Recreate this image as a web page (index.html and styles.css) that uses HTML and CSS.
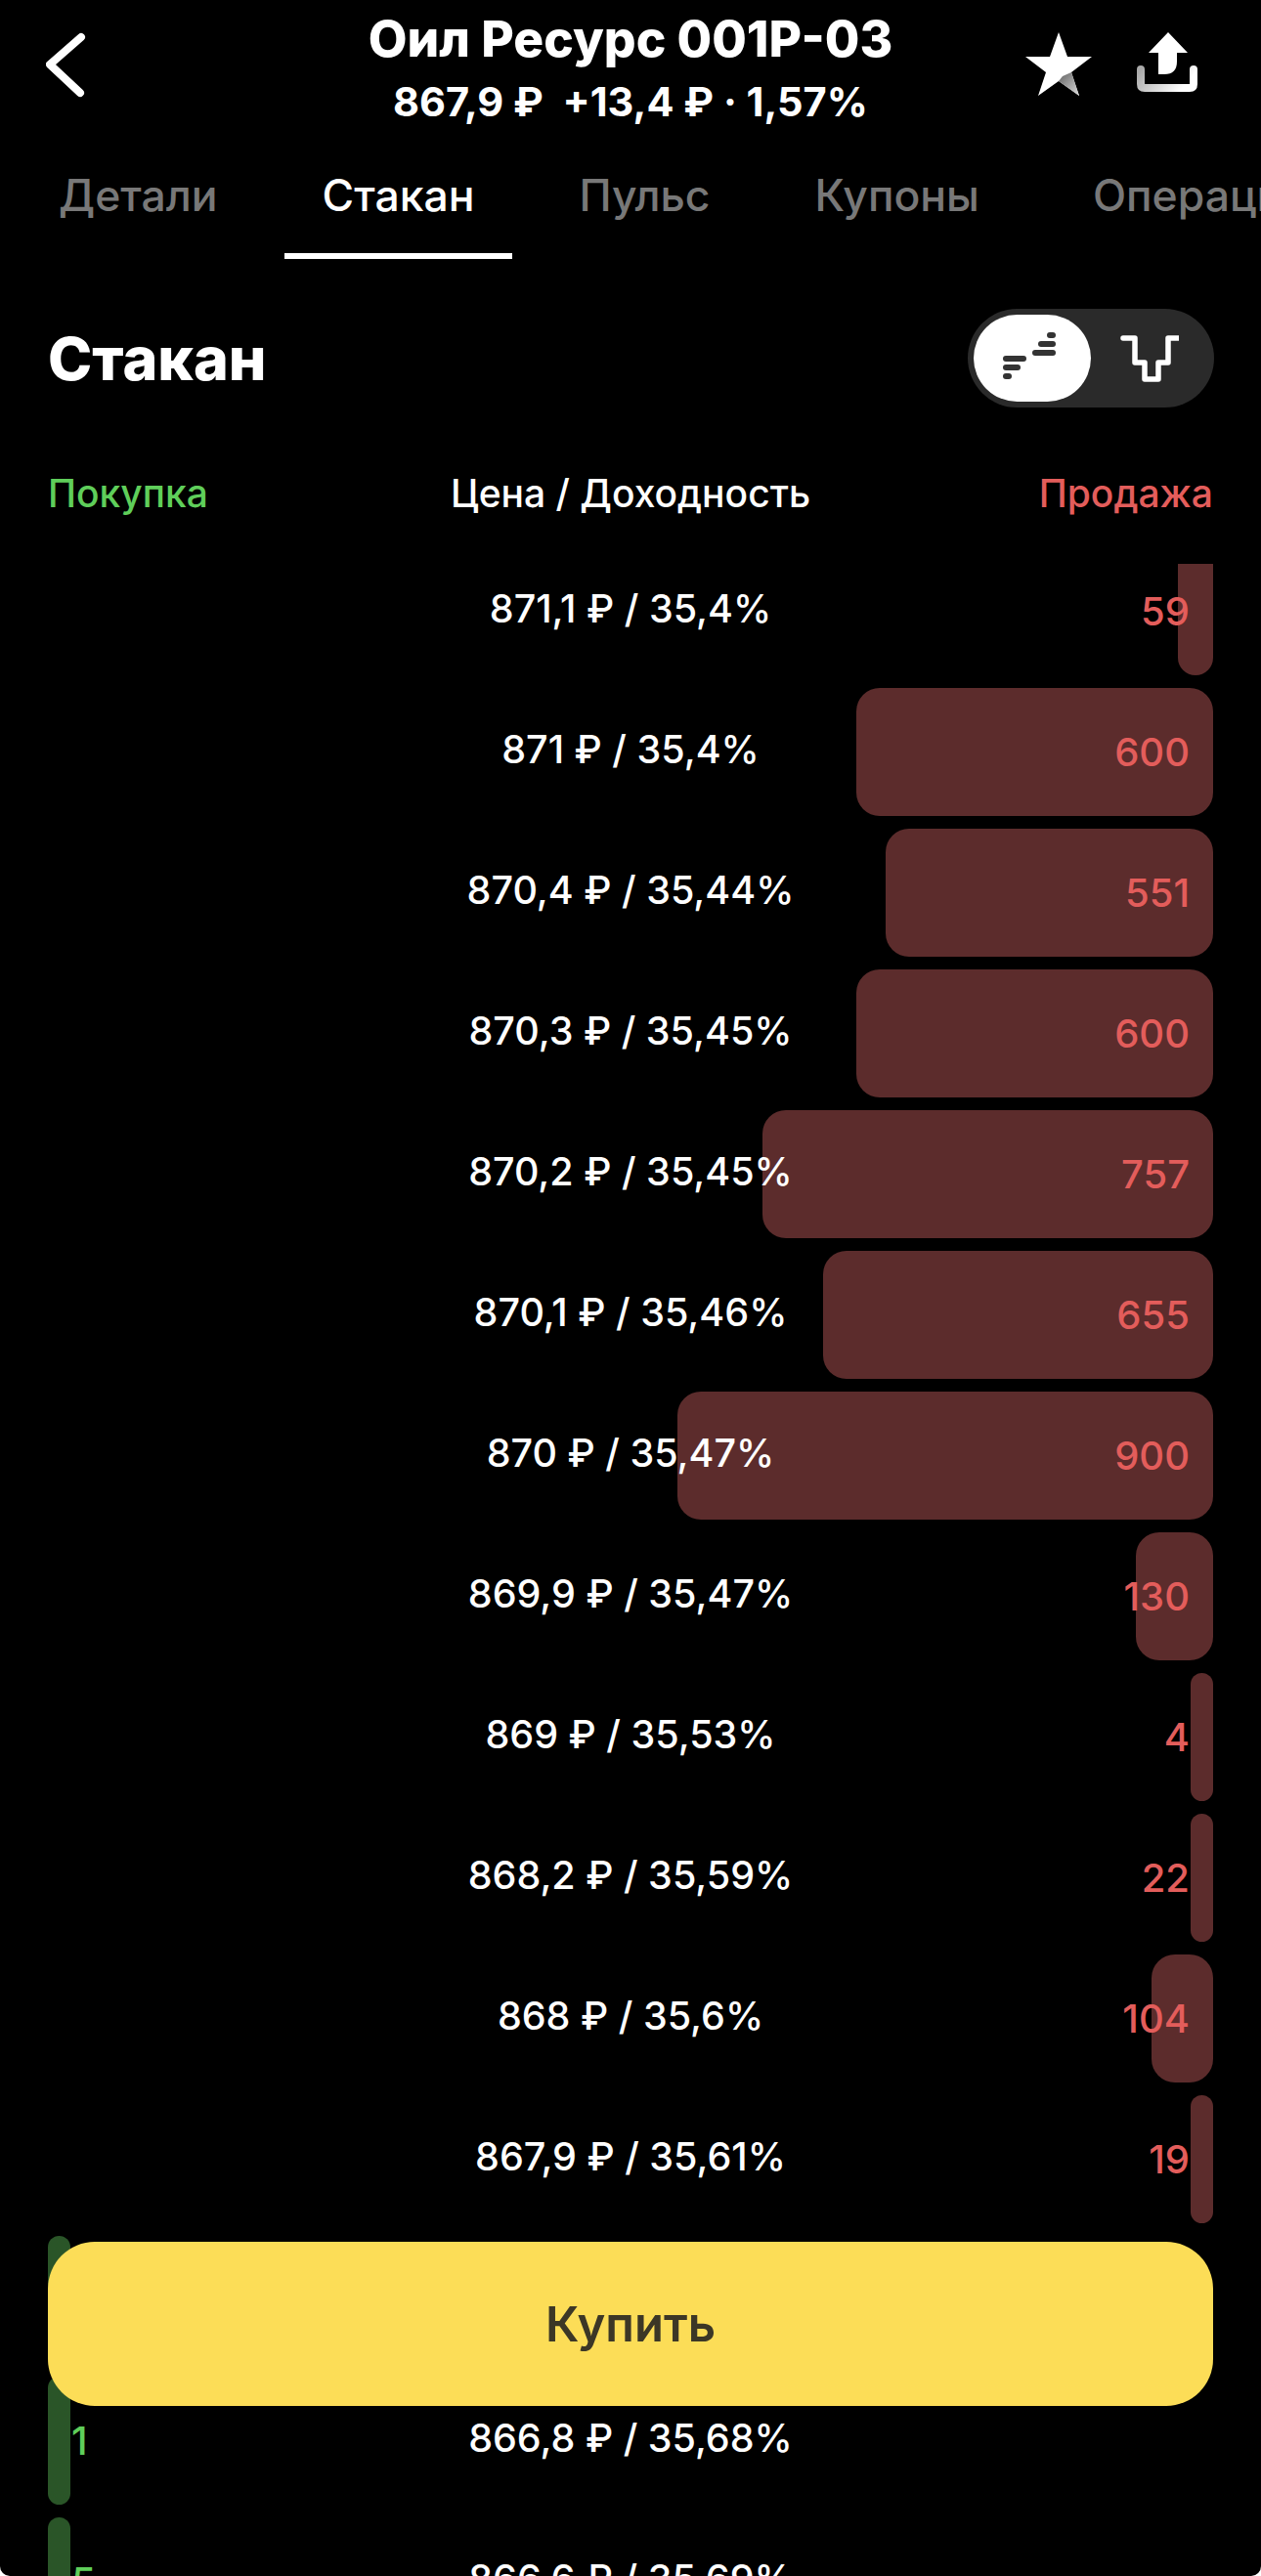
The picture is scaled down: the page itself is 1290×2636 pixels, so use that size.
FILE: index.html
```html
<!DOCTYPE html>
<html lang="ru">
<head>
  <meta charset="UTF-8" />
  <meta name="viewport" content="width=device-width, initial-scale=1.0"/>
  <title>Стакан</title>
  <link rel="stylesheet" href="styles.css">
</head>
<body>
  <div class="screen">

    <header class="topbar">
      <a class="back">
        <svg width="44" height="68" viewBox="0 0 44 68"><path d="M36 4 L4 32 L35 61" transform="translate(0 2)" fill="none" stroke="#fff" stroke-width="8" stroke-linecap="round" stroke-linejoin="round"/></svg>
      </a>
      <div class="title-block">
        <h1>Оил Ресурс 001Р-03</h1>
        <p>867,9 ₽ &nbsp;+13,4 ₽ · 1,57%</p>
      </div>
      <div class="actions">
        <svg class="star" width="68" height="66" viewBox="0 0 68 66">
          <defs>
            <linearGradient id="starLeg" x1="0.1" y1="0" x2="1" y2="1">
              <stop offset="0" stop-color="#666"/>
              <stop offset="1" stop-color="#ddd"/>
            </linearGradient>
          </defs>
          <path d="M34 0 L43 25 L68 25 L47 41 L55 65 L34 50 L13 65 L21 41 L0 25 L25 25 Z" fill="#fff"/>
          <path d="M47 41 L55 65 L34 50 L38 45 Z" fill="url(#starLeg)"/>
        </svg>
        <svg class="share" width="62" height="62" viewBox="0 0 62 62">
          <defs>
            <linearGradient id="tray" x1="0" y1="0" x2="1" y2="0.3">
              <stop offset="0" stop-color="#aaa"/>
              <stop offset="1" stop-color="#fff"/>
            </linearGradient>
          </defs>
          <path d="M4 38 V53 Q4 57 8 57 H54 Q58 57 58 53 V38" fill="none" stroke="url(#tray)" stroke-width="8" stroke-linecap="round"/>
          <path d="M32 0 L52 21 H41 V30 Q41 43 28 43 H22 V21 H12 Z" fill="#fff"/>
        </svg>
      </div>
    </header>

    <nav class="tabs">
      <a class="tab">Детали</a>
      <a class="tab active">Стакан</a>
      <a class="tab">Пульс</a>
      <a class="tab">Купоны</a>
      <a class="tab">Операции</a>
    </nav>

    <div class="section-head">
      <h2>Стакан</h2>
      <div class="toggle">
        <span class="toggle-item on">
          <svg width="60" height="54" viewBox="0 0 60 54" fill="#333">
            <rect x="0" y="24" width="24" height="6" rx="3"/>
            <rect x="0" y="33" width="18" height="6" rx="3"/>
            <rect x="0" y="42" width="9" height="6" rx="3"/>
            <rect x="30" y="18" width="24" height="6" rx="3"/>
            <rect x="36" y="9" width="18" height="6" rx="3"/>
            <rect x="45" y="0" width="9" height="6" rx="3"/>
          </svg>
        </span>
        <span class="toggle-item">
          <svg width="60" height="50" viewBox="0 -1 60 50"><path d="M3 3 H15 V28 H25 V45 H39 V28 H49 V3 H59" fill="none" stroke="#fff" stroke-width="5.5" stroke-linecap="round" stroke-linejoin="round"/></svg>
        </span>
      </div>
    </div>

    <div class="columns">
      <span class="buy">Покупка</span>
      <span class="mid">Цена / Доходность</span>
      <span class="sell">Продажа</span>
    </div>

    <div class="book">
      <div class="row">
        <div class="bar sell-bar" style="width: 36px"></div>
        <span></span><span class="price">871,1 ₽ / 35,4%</span><span class="qty sell">59</span>
      </div>
      <div class="row">
        <div class="bar sell-bar" style="width: 365px"></div>
        <span></span><span class="price">871 ₽ / 35,4%</span><span class="qty sell">600</span>
      </div>
      <div class="row">
        <div class="bar sell-bar" style="width: 335px"></div>
        <span></span><span class="price">870,4 ₽ / 35,44%</span><span class="qty sell">551</span>
      </div>
      <div class="row">
        <div class="bar sell-bar" style="width: 365px"></div>
        <span></span><span class="price">870,3 ₽ / 35,45%</span><span class="qty sell">600</span>
      </div>
      <div class="row">
        <div class="bar sell-bar" style="width: 461px"></div>
        <span></span><span class="price">870,2 ₽ / 35,45%</span><span class="qty sell">757</span>
      </div>
      <div class="row">
        <div class="bar sell-bar" style="width: 399px"></div>
        <span></span><span class="price">870,1 ₽ / 35,46%</span><span class="qty sell">655</span>
      </div>
      <div class="row">
        <div class="bar sell-bar" style="width: 548px"></div>
        <span></span><span class="price">870 ₽ / 35,47%</span><span class="qty sell">900</span>
      </div>
      <div class="row">
        <div class="bar sell-bar" style="width: 79px"></div>
        <span></span><span class="price">869,9 ₽ / 35,47%</span><span class="qty sell">130</span>
      </div>
      <div class="row">
        <div class="bar sell-bar" style="width: 23px"></div>
        <span></span><span class="price">869 ₽ / 35,53%</span><span class="qty sell">4</span>
      </div>
      <div class="row">
        <div class="bar sell-bar" style="width: 23px"></div>
        <span></span><span class="price">868,2 ₽ / 35,59%</span><span class="qty sell">22</span>
      </div>
      <div class="row">
        <div class="bar sell-bar" style="width: 63px"></div>
        <span></span><span class="price">868 ₽ / 35,6%</span><span class="qty sell">104</span>
      </div>
      <div class="row">
        <div class="bar sell-bar" style="width: 23px"></div>
        <span></span><span class="price">867,9 ₽ / 35,61%</span><span class="qty sell">19</span>
      </div>
      <div class="row">
        <div class="bar buy-bar" style="width: 23px"></div>
      </div>
      <div class="row">
        <div class="bar buy-bar" style="width: 23px"></div>
        <span class="qty buy">1</span><span class="price">866,8 ₽ / 35,68%</span><span></span>
      </div>
      <div class="row">
        <div class="bar buy-bar" style="width: 23px"></div>
        <span class="qty buy">5</span><span class="price">866,6 ₽ / 35,69%</span><span></span>
      </div>
    </div>

    <button class="buy-btn">Купить</button>
  </div>
</body>
</html>
```

FILE: styles.css
```css
* {
  box-sizing: border-box;
}

body {
  margin: 0;
  background: #fff;
  font-family: Inter, Roboto, sans-serif;
  color: #fff;
}

.screen {
  position: relative;
  width: 1290px;
  height: 2636px;
  background: #000;
  border-radius: 0 0 10px 10px;
  overflow: hidden;
  display: flex;
  flex-direction: column;
}

/* top bar */
.topbar {
  height: 138px;
  display: grid;
  grid-template-columns: 1fr auto 1fr;
}

.back {
  padding: 32px 0 0 47px;
}

.title-block {
  text-align: center;
}

.title-block h1 {
  margin: 8px 0 0;
  font-size: 51.5px;
  line-height: 62px;
  font-weight: 800;
}

.title-block p {
  margin: 0;
  font-size: 41.5px;
  line-height: 68px;
  font-weight: 700;
}

.actions {
  display: flex;
  justify-content: flex-end;
  align-items: flex-start;
  gap: 46px;
  padding: 33px 65px 0 0;
}

/* tabs */
.tabs {
  height: 127px;
  display: flex;
  gap: 29px;
  padding-left: 21px;
  overflow: hidden;
}

.tab {
  flex: none;
  height: 127px;
  padding: 34px 39px 0;
  font-size: 44.5px;
  line-height: 56px;
  font-weight: 500;
  color: #787878;
}

.tab:last-child {
  margin-left: 9px;
}

.tab.active {
  color: #fff;
  border-bottom: 6px solid #fff;
}

/* heading + view switch */
.section-head {
  margin-top: 51px;
  padding: 0 48px 0 49px;
  display: flex;
  justify-content: space-between;
  align-items: center;
}

.section-head h2 {
  margin: 0;
  font-size: 61px;
  font-weight: 800;
}

.toggle {
  width: 252px;
  height: 101px;
  padding: 6px;
  border-radius: 51px;
  background: #2a2a2a;
  display: flex;
}

.toggle-item {
  width: 120px;
  height: 89px;
  border-radius: 45px;
  display: flex;
  align-items: center;
  justify-content: center;
}

.toggle-item.on {
  background: #fff;
}

/* column titles */
.columns {
  margin-top: 66px;
  margin-bottom: 1px;
  padding: 0 49px;
  display: grid;
  grid-template-columns: 1fr auto 1fr;
  font-size: 39px;
  line-height: 44px;
  font-weight: 500;
}

.columns .sell {
  text-align: right;
}

.buy {
  color: #5fce5a;
}

.sell {
  color: #e35d5b;
}

/* order book */
.book {
  flex: 1;
  margin-top: 49px;
  padding: 0 49px;
  overflow: hidden;
}

.row {
  position: relative;
  height: 131px;
  margin-bottom: 13px;
  display: grid;
  grid-template-columns: 1fr auto 1fr;
  align-items: center;
  font-size: 40px;
  font-weight: 500;
}

.row:first-child {
  margin-top: -17px;
}

.bar {
  position: absolute;
  top: 0;
  bottom: 0;
  border-radius: 24px;
}

.sell-bar {
  right: 0;
  background: #5c2c2c;
}

.buy-bar {
  left: 0;
  background: #2a5528;
}

.price {
  position: relative;
  margin-top: -5px;
  font-size: 39.5px;
}

.qty {
  position: relative;
  padding: 0 24px;
}

.qty.sell {
  text-align: right;
}

/* sticky action */
.buy-btn {
  position: absolute;
  left: 49px;
  right: 49px;
  bottom: 174px;
  height: 168px;
  border: none;
  border-radius: 48px;
  background: #fcdd57;
  color: #3c3726;
  font-family: inherit;
  font-size: 49px;
  font-weight: 600;
}
```
